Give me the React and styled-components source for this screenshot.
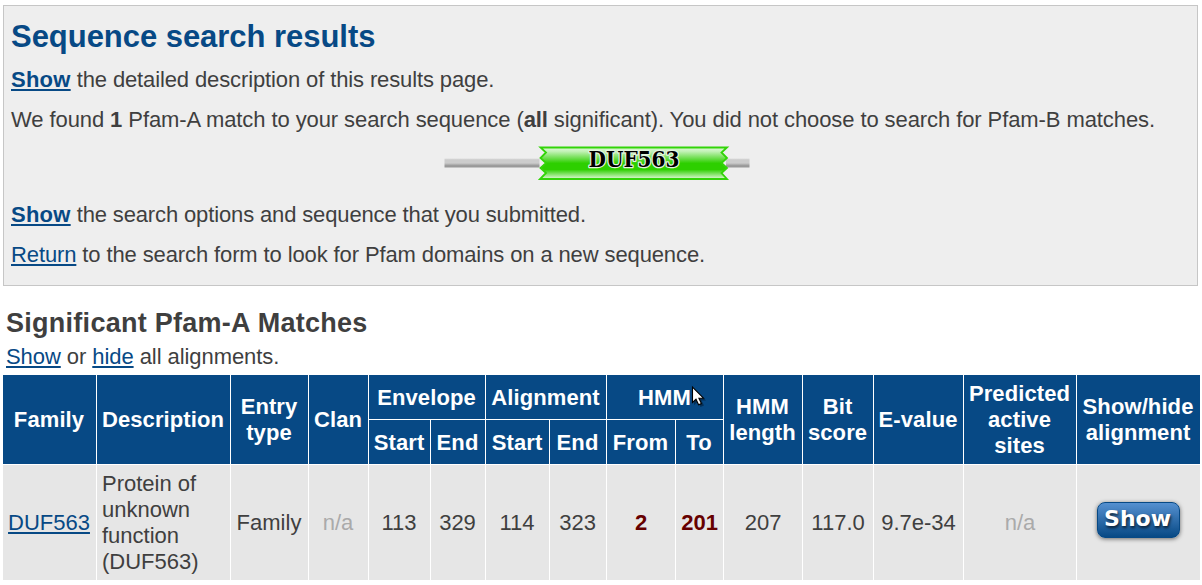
import React from 'react';
import styled, { createGlobalStyle } from 'styled-components';

const GlobalStyle = createGlobalStyle`
  * { box-sizing: border-box; }
  html, body { overflow: hidden; }
  body {
    margin: 0;
    background: #fff;
    color: #3f3f3f;
    font: 22px/26px "Liberation Sans", Arial, sans-serif;
  }
`;

const Page = styled.main`
  width: 1202px;
  height: 585px;
  padding: 5px 2px 0 3px;
  overflow: hidden;
`;

const Panel = styled.section`
  width: 1195px;
  height: 281px;
  padding: 13px 7px 0;
  border: 1px solid #c6c6c6;
  background: #eee;
`;

const Title = styled.h1`
  margin: 0 0 12px;
  font-size: 31px;
  line-height: 36px;
  font-weight: bold;
  letter-spacing: -0.04px;
  color: #074985;
`;

const Text = styled.p`
  margin: 0 0 14px;
  white-space: nowrap;
  letter-spacing: ${(p) => p.$tracking || -0.1}px;
`;

const Link = styled.a`
  color: #074985;
  font-weight: ${(p) => (p.$bold ? 'bold' : 'normal')};
  letter-spacing: ${(p) => (p.$bold ? '0.25px' : 'inherit')};
  text-decoration: underline;
  text-decoration-thickness: 2px;
  text-underline-offset: 2px;
  cursor: pointer;
`;

const Graphic = styled.svg`
  display: block;
  width: 320px;
  height: 40px;
  margin: -4px 0 19px 429px;
`;

const Subtitle = styled.h2`
  margin: 22px 0 6px 3px;
  font-size: 27px;
  line-height: 30px;
  font-weight: bold;
  letter-spacing: 0.27px;
`;

const Controls = styled.p`
  margin: 0 0 5px 3px;
  letter-spacing: -0.07px;
`;

const Table = styled.table`
  width: 1197px;
  table-layout: fixed;
  border-collapse: separate;
  border-spacing: 0;
`;

const Col = styled.col`
  width: ${(p) => p.$w}px;
`;

const HeadRow = styled.tr`
  height: 45px;
`;

const Th = styled.th`
  padding: 1px 1px 0 0;
  background: #074985;
  color: #fff;
  font-weight: bold;
  letter-spacing: 0.1px;
  text-align: center;
  vertical-align: middle;
  border-right: ${(p) => (p.$last ? 0 : 1)}px solid #fff;
  border-bottom: 1px solid #fff;
`;

const BodyRow = styled.tr`
  height: 115px;
`;

const Td = styled.td`
  padding: 0 1px 0 ${(p) => (p.$left ? 5 : 0)}px;
  background: #e6e6e6;
  color: ${(p) => p.$color || 'inherit'};
  font-weight: ${(p) => (p.$bold ? 'bold' : 'normal')};
  text-align: ${(p) => (p.$left ? 'left' : 'center')};
  vertical-align: middle;
  border-right: ${(p) => (p.$last ? 0 : 1)}px solid #fff;

  &:nth-child(n + 9) {
    padding-right: 0;
  }
`;

const ShowButton = styled.button`
  display: block;
  width: 83px;
  height: 36px;
  margin: -5px auto 0 20px;
  padding: 0 2px 3px 0;
  border: 1px solid #074985;
  border-radius: 8px;
  background: linear-gradient(#5590d0, #074985);
  box-shadow: 0 1px 4px rgba(0, 0, 0, 0.55);
  color: #fff;
  font: bold 22px/30px "DejaVu Sans", sans-serif;
  text-shadow: 1px 2px 3px rgba(0, 0, 0, 0.7);
`;

const Cursor = styled.svg`
  position: absolute;
  left: 690px;
  top: 385px;
  width: 18px;
  height: 24px;
`;

const columns = [94, 134, 78, 60, 62, 55, 64, 57, 69, 48, 79, 71, 90, 113, 123];

function DomainGraphic() {
  return (
    <Graphic viewBox="440 143 320 40">
      <defs>
        <linearGradient id="rod" x1="0" y1="0" x2="0" y2="1">
          <stop offset="0" stopColor="#ddd" />
          <stop offset="0.15" stopColor="#ccc" />
          <stop offset="0.5" stopColor="#ccc" />
          <stop offset="0.8" stopColor="#999" />
          <stop offset="1" stopColor="#999" />
        </linearGradient>
        <linearGradient id="domain" x1="0" y1="0" x2="0" y2="1">
          <stop offset="0" stopColor="#e0f9d9" />
          <stop offset="0.12" stopColor="#c4f2b8" />
          <stop offset="0.5" stopColor="#2dcf00" />
          <stop offset="0.7" stopColor="#2dcf00" />
          <stop offset="1" stopColor="#e0f9d9" />
        </linearGradient>
      </defs>
      <rect x="444.5" y="158.5" width="95" height="9" fill="url(#rod)" />
      <rect x="726" y="158.5" width="23.5" height="9" fill="url(#rod)" />
      <path
        d="M540.5 147.5H727L721.5 152.5L727 158L721.5 163L727 168L721.5 173L727 179H540L546 173L540.5 168L546 163L540.5 158L546 152.5Z"
        fill="url(#domain)"
        stroke="#32d408"
        strokeWidth="1.8"
      />
      <text
        x="634"
        y="167"
        textAnchor="middle"
        textLength="91"
        lengthAdjust="spacingAndGlyphs"
        fontFamily="'DejaVu Serif Condensed', 'DejaVu Serif', serif"
        fontSize="23"
        fontWeight="bold"
        fill="#000"
        stroke="#e4f5df"
        strokeWidth="2.5"
        strokeLinejoin="round"
        paintOrder="stroke"
      >
        DUF563
      </text>
    </Graphic>
  );
}

export default function App() {
  return (
    <>
      <GlobalStyle />
      <Page>
        <Panel>
          <Title>Sequence search results</Title>
          <Text $tracking={-0.12}><Link $bold>Show</Link> the detailed description of this results page.</Text>
          <Text $tracking={-0.087}>
            We found <b>1</b> Pfam-A match to your search sequence (<b>all</b> significant). You did not choose to search for Pfam-B matches.
          </Text>
          <DomainGraphic />
          <Text $tracking={-0.135}><Link $bold>Show</Link> the search options and sequence that you submitted.</Text>
          <Text $tracking={-0.115}><Link>Return</Link> to the search form to look for Pfam domains on a new sequence.</Text>
        </Panel>
        <Subtitle>Significant Pfam-A Matches</Subtitle>
        <Controls><Link>Show</Link> or <Link>hide</Link> all alignments.</Controls>
        <Table>
          <colgroup>
            {columns.map((w, i) => <Col key={i} $w={w} />)}
          </colgroup>
          <thead>
            <HeadRow>
              <Th rowSpan={2}>Family</Th>
              <Th rowSpan={2}>Description</Th>
              <Th rowSpan={2}>Entry<br />type</Th>
              <Th rowSpan={2}>Clan</Th>
              <Th colSpan={2}>Envelope</Th>
              <Th colSpan={2}>Alignment</Th>
              <Th colSpan={2}>HMM</Th>
              <Th rowSpan={2}>HMM<br />length</Th>
              <Th rowSpan={2}>Bit<br />score</Th>
              <Th rowSpan={2}>E-value</Th>
              <Th rowSpan={2}>Predicted<br />active<br />sites</Th>
              <Th rowSpan={2} $last>Show/hide<br />alignment</Th>
            </HeadRow>
            <HeadRow>
              <Th>Start</Th>
              <Th>End</Th>
              <Th>Start</Th>
              <Th>End</Th>
              <Th>From</Th>
              <Th>To</Th>
            </HeadRow>
          </thead>
          <tbody>
            <BodyRow>
              <Td><Link>DUF563</Link></Td>
              <Td $left>Protein of unknown function (DUF563)</Td>
              <Td>Family</Td>
              <Td $color="#aaa">n/a</Td>
              <Td>113</Td>
              <Td>329</Td>
              <Td>114</Td>
              <Td>323</Td>
              <Td $bold $color="#600">2</Td>
              <Td $bold $color="#600">201</Td>
              <Td>207</Td>
              <Td>117.0</Td>
              <Td>9.7e-34</Td>
              <Td $color="#aaa">n/a</Td>
              <Td $last><ShowButton>Show</ShowButton></Td>
            </BodyRow>
          </tbody>
        </Table>
        <Cursor viewBox="0 0 18 24">
          <path d="M4 4V20L8 16.5L10.5 22L14 20.5L11.5 15.5H16Z" fill="#000" opacity="0.35" />
          <path d="M2.5 2V17.5L6 14.2L8.6 19.8L11.4 18.6L8.9 13.2H13.5Z" fill="#fff" stroke="#000" strokeWidth="1.1" />
        </Cursor>
      </Page>
    </>
  );
}
